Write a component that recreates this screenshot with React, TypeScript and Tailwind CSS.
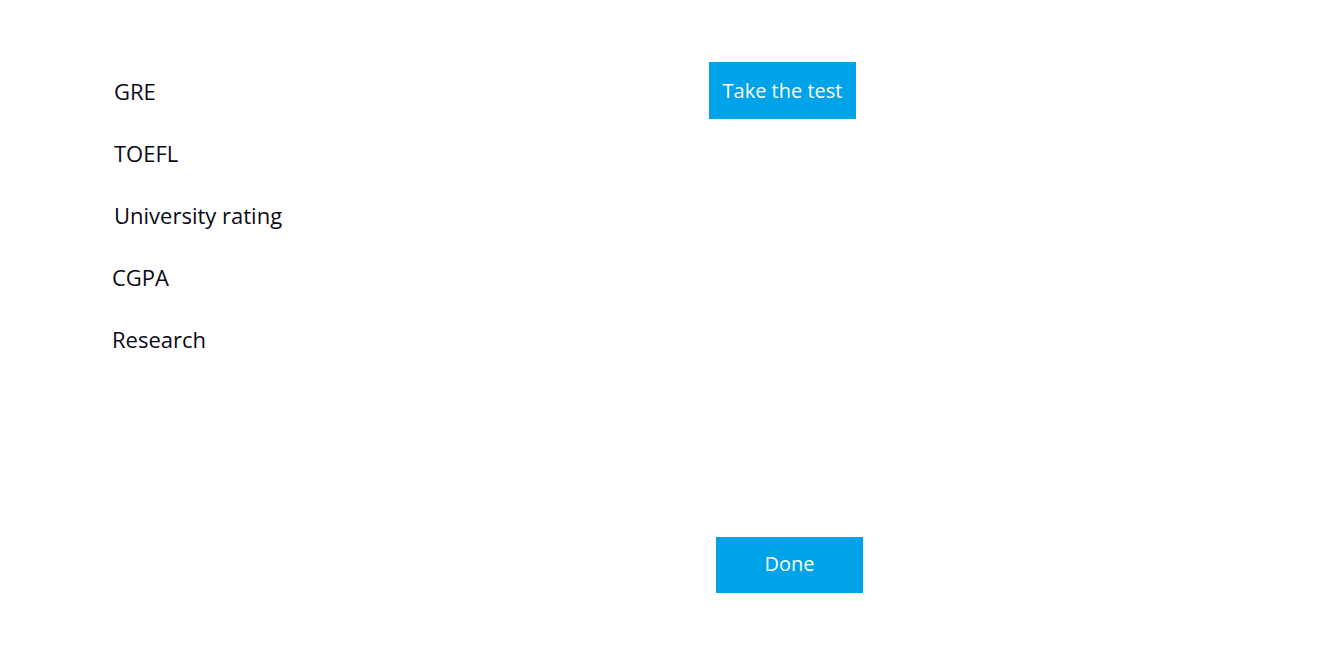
import React from "react";

const labels = [
  { text: "GRE", shift: "ml-[2px]" },
  { text: "TOEFL", shift: "ml-[2px]" },
  { text: "University rating", shift: "ml-[2px]" },
  { text: "CGPA", shift: "" },
  { text: "Research", shift: "" },
];

export default function App() {
  return (
    <div className="h-[650px] w-full bg-white font-['Open_Sans',_'Noto_Sans',_sans-serif]">
      <div className="flex pt-[60px]">
        <div className="w-[709px] pl-[112px] flex flex-col">
          {labels.map((l) => (
            <div
              key={l.text}
              className={`h-[62px] leading-[62px] text-[22px] font-medium text-[#0a0a18] ${l.shift}`}
            >
              {l.text}
            </div>
          ))}
        </div>
        <div>
          <button className="mt-[2px] w-[147px] h-[57px] bg-[#00a2e8] text-white text-[20px]">
            Take the test
          </button>
        </div>
      </div>
      <div className="pl-[716px] mt-[167px]">
        <button className="w-[147px] h-[56px] pb-[2px] bg-[#00a2e8] text-white text-[20px]">
          Done
        </button>
      </div>
    </div>
  );
}
